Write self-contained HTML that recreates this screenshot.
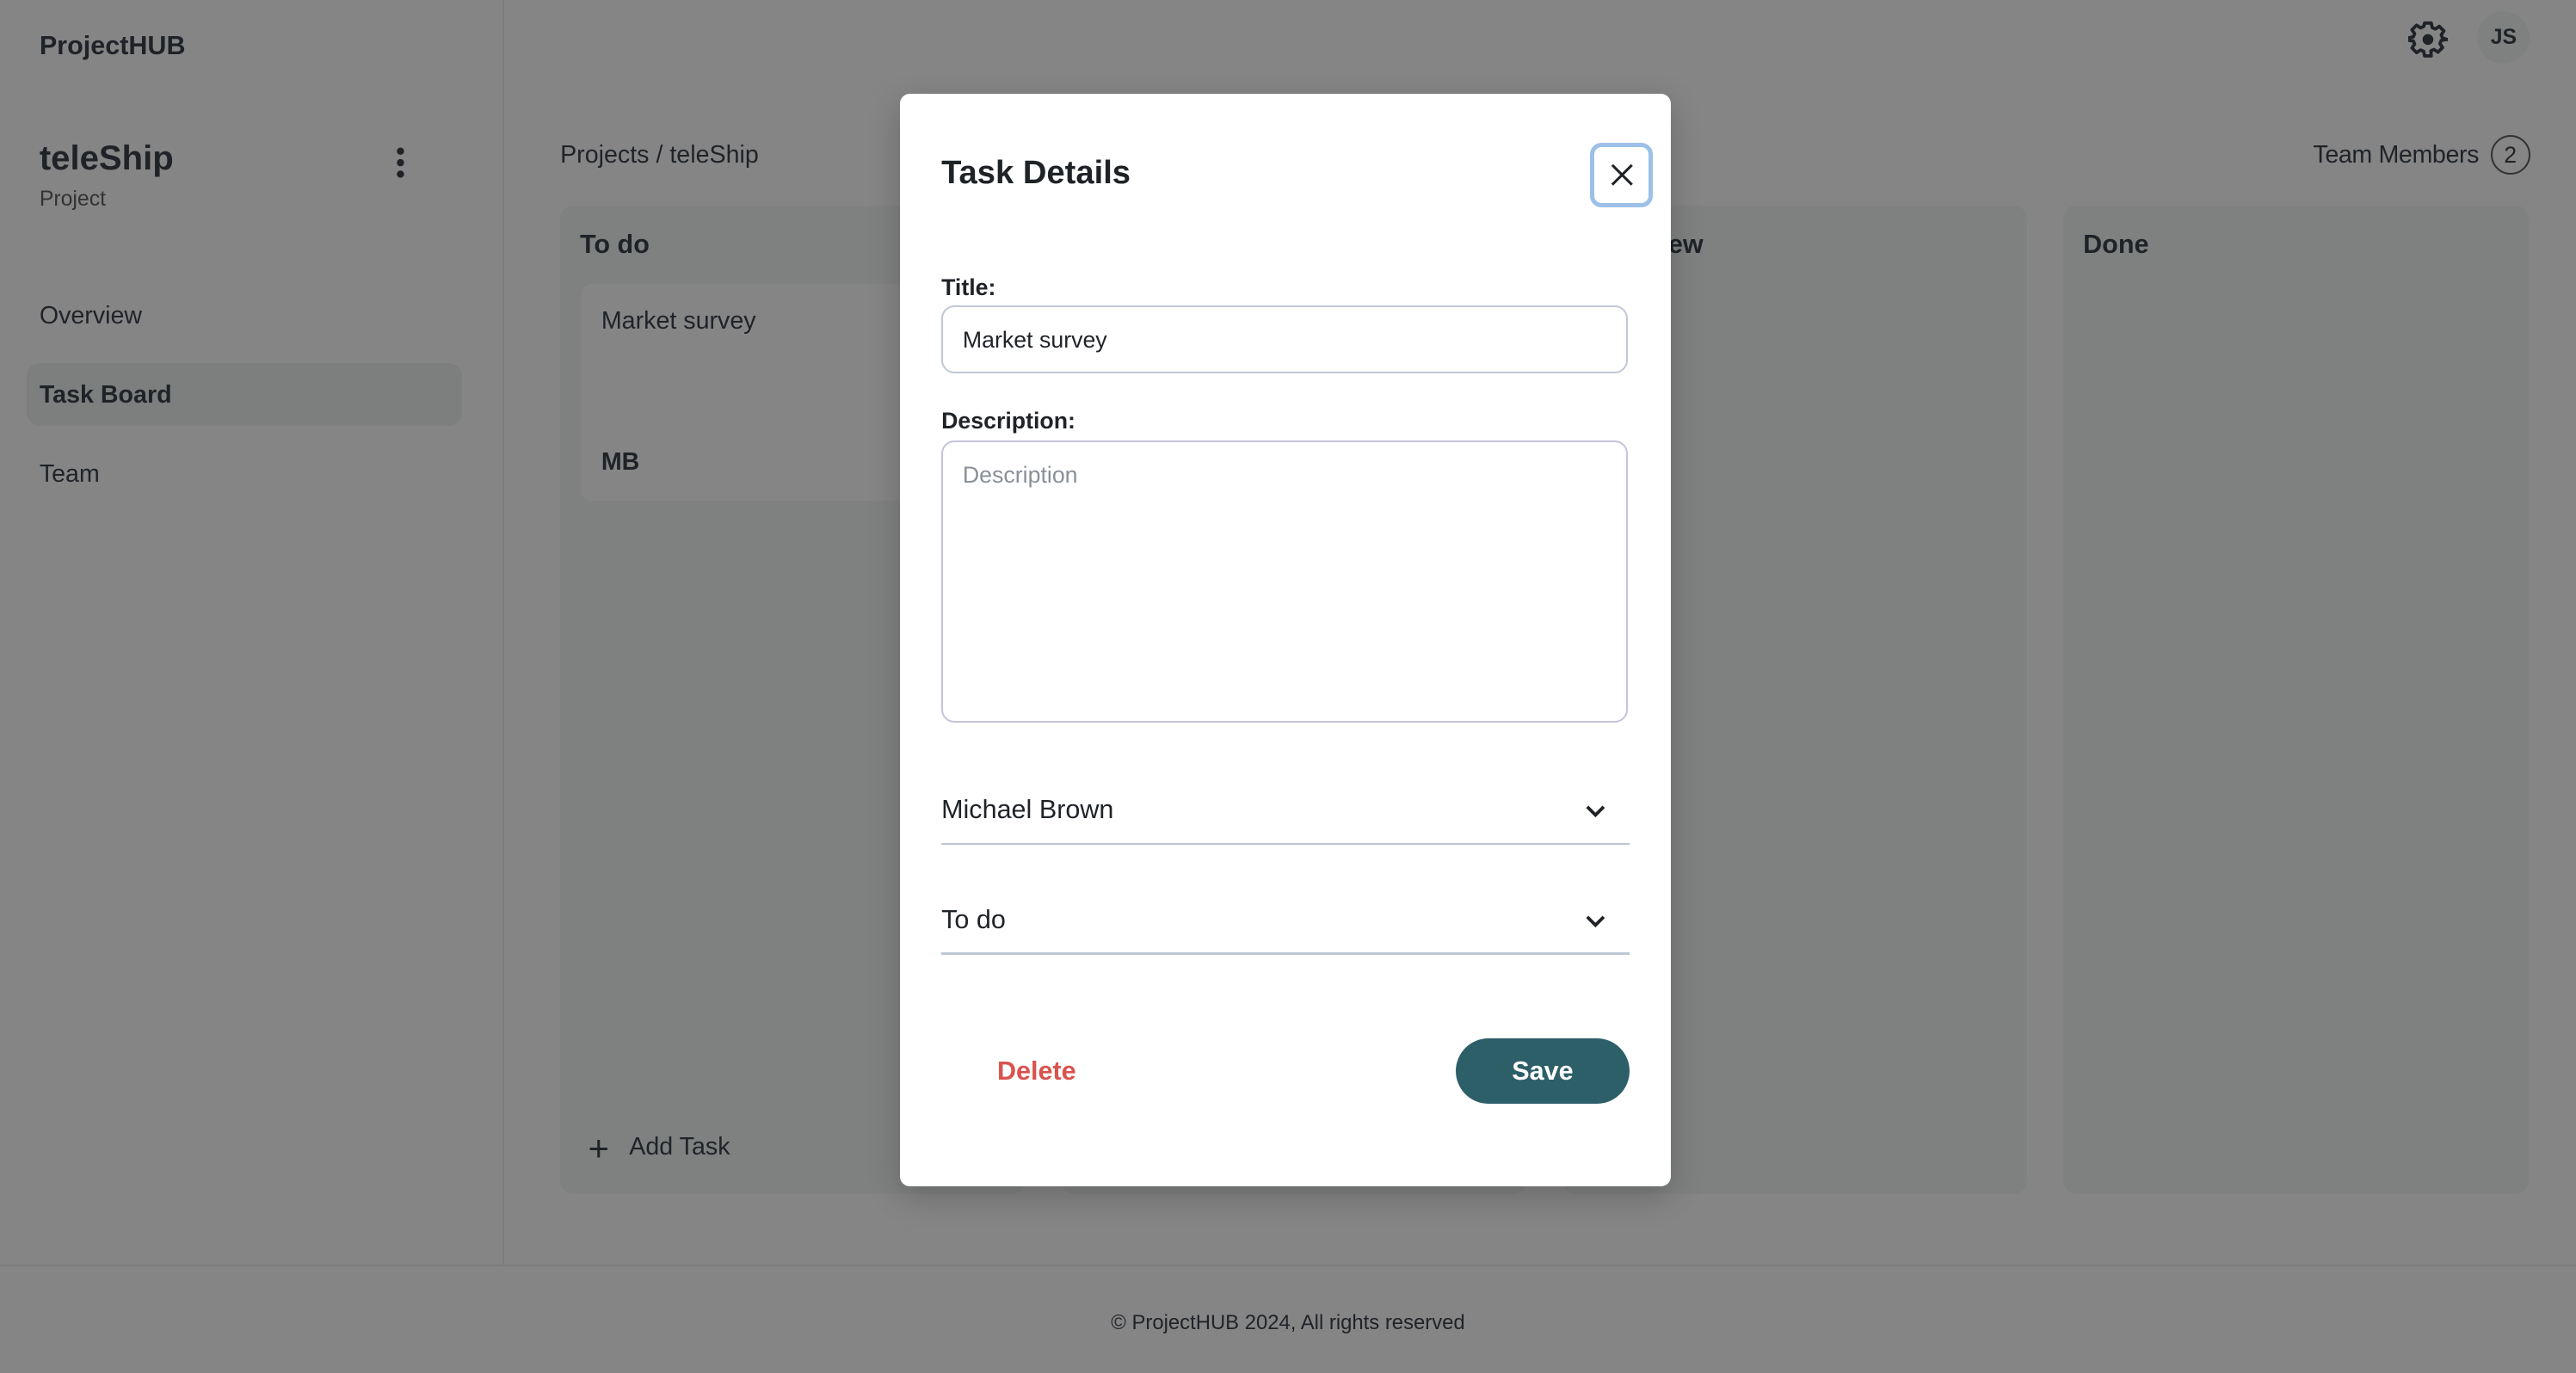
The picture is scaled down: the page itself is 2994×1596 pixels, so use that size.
<!DOCTYPE html>
<html><head><meta charset="utf-8"><style>
html,body{margin:0;padding:0;background:#858585;overflow:hidden}
#root{zoom:1.9094;width:1568px;height:836px;position:relative;font-family:"Liberation Sans",sans-serif;color:#1f2328;background:#858585}
.a{position:absolute;white-space:nowrap}
.col{position:absolute;top:125px;height:602px;width:283px;background:#7f8180;border-radius:8px}
.ch{position:absolute;left:12px;top:15px;font-size:16px;font-weight:bold}
</style></head><body><div id="root">
<div class="a" style="left:306px;top:0;width:1px;height:770px;background:#7c7c7c"></div>
<div class="a" style="left:0;top:770px;width:1568px;height:1px;background:#7c7c7c"></div>
<div class="a" style="left:24px;top:19px;font-size:16px;font-weight:bold">ProjectHUB</div>
<div class="a" style="left:24px;top:85px;font-size:21px;font-weight:bold">teleShip</div>
<div class="a" style="left:24px;top:114px;font-size:13px;color:#333">Project</div>
<svg class="a" style="left:238px;top:89px" width="12" height="20"><circle cx="6" cy="3" r="2.2" fill="#1f2328"/><circle cx="6" cy="10" r="2.2" fill="#1f2328"/><circle cx="6" cy="17" r="2.2" fill="#1f2328"/></svg>
<div class="a" style="left:24px;top:184px;font-size:15px">Overview</div>
<div class="a" style="left:16px;top:221px;width:265px;height:38px;background:#7d7f7e;border-radius:8px"></div>
<div class="a" style="left:24px;top:232px;font-size:15px;font-weight:bold">Task Board</div>
<div class="a" style="left:24px;top:280px;font-size:15px">Team</div>
<div class="a" style="left:341px;top:86px;font-size:15px">Projects / teleShip</div>
<div class="a" style="left:1408px;top:86px;font-size:15px;letter-spacing:-0.2px">Team Members</div>
<div class="a" style="left:1516px;top:82px;width:22px;height:22px;border:1.3px solid #333;border-radius:50%;font-size:14px;text-align:center;line-height:22px">2</div>
<svg class="a" style="left:1466px;top:12px" width="24" height="24" viewBox="0 0 24 24"><path d="M10 2h4l.6 2.8 1.9.8 2.4-1.6 2.8 2.8-1.6 2.4.8 1.9L23.7 12l-.8 0v0l-2.8.6-.8 1.9 1.6 2.4-2.8 2.8-2.4-1.6-1.9.8L14 22h-4l-.6-2.8-1.9-.8-2.4 1.6-2.8-2.8 1.6-2.4-.8-1.9L.3 12.5V11l2.8-.6.8-1.9-1.6-2.4 2.8-2.8 2.4 1.6 1.9-.8z" fill="none" stroke="#1f2328" stroke-width="2" stroke-linejoin="round"/><circle cx="12" cy="12" r="3.3" fill="#1f2328"/></svg>
<div class="a" style="left:1508px;top:7px;width:32px;height:32px;border-radius:50%;background:#7f8180;font-size:13px;font-weight:bold;text-align:center;line-height:32px">JS</div>
<div class="col" style="left:341px"><div class="ch">To do</div>
<div class="a" style="left:13px;top:48px;width:270px;height:132px;background:#858585;border-radius:6px"></div>
<div class="a" style="left:25px;top:62px;font-size:15px">Market survey</div>
<div class="a" style="left:25px;top:148px;font-size:15px;font-weight:bold">MB</div>
<div class="a" style="left:17px;top:564px;font-size:22px;line-height:20px">+</div>
<div class="a" style="left:42px;top:565px;font-size:15px">Add Task</div></div>
<div class="col" style="left:646px"></div>
<div class="col" style="left:951px"><div class="ch">In Review</div></div>
<div class="col" style="left:1256px"><div class="ch">Done</div></div>
<div class="a" style="left:0;top:798px;width:1568px;text-align:center;font-size:12.5px">© ProjectHUB 2024, All rights reserved</div>
<div class="a" style="left:548px;top:57px;width:469px;height:665px;background:#fff;border-radius:6px;box-shadow:0 6px 20px rgba(0,0,0,.2)">
<div class="a" style="left:25px;top:37px;font-size:20px;font-weight:bold">Task Details</div>
<div class="a" style="left:420px;top:30px;width:33px;height:34px;border:3px solid #9cc0e8;border-radius:7px"><svg style="position:absolute;left:9px;top:9px" width="16" height="16"><path d="M2 2L14 14M14 2L2 14" stroke="#1f2328" stroke-width="1.6"/></svg></div>
<div class="a" style="left:25px;top:110px;font-size:14px;font-weight:bold">Title:</div>
<div class="a" style="left:25px;top:129px;width:416px;height:39px;border:1.3px solid #c0c8d6;border-radius:8px"></div>
<div class="a" style="left:38px;top:142px;font-size:14px">Market survey</div>
<div class="a" style="left:25px;top:191px;font-size:14px;font-weight:bold">Description:</div>
<div class="a" style="left:25px;top:211px;width:416px;height:170px;border:1.3px solid #c4c4dc;border-radius:8px"></div>
<div class="a" style="left:38px;top:224px;font-size:14px;color:#8a8f98">Description</div>
<div class="a" style="left:25px;top:427px;font-size:16px">Michael Brown</div>
<svg class="a" style="left:416px;top:432px" width="14" height="10"><path d="M2 2l5 5 5-5" fill="none" stroke="#1f2328" stroke-width="2"/></svg>
<div class="a" style="left:25px;top:456px;width:419px;height:1.3px;background:#bcc6d4"></div>
<div class="a" style="left:25px;top:494px;font-size:16px">To do</div>
<svg class="a" style="left:416px;top:499px" width="14" height="10"><path d="M2 2l5 5 5-5" fill="none" stroke="#1f2328" stroke-width="2"/></svg>
<div class="a" style="left:25px;top:523px;width:419px;height:1.3px;background:#bcc6d4"></div>
<div class="a" style="left:59px;top:586px;font-size:16px;font-weight:bold;color:#d9534f">Delete</div>
<div class="a" style="left:338px;top:575px;width:106px;height:40px;border-radius:20px;background:#2d5f69;color:#fff;font-size:16px;font-weight:bold;text-align:center;line-height:40px">Save</div>
</div>
</div></body></html>
